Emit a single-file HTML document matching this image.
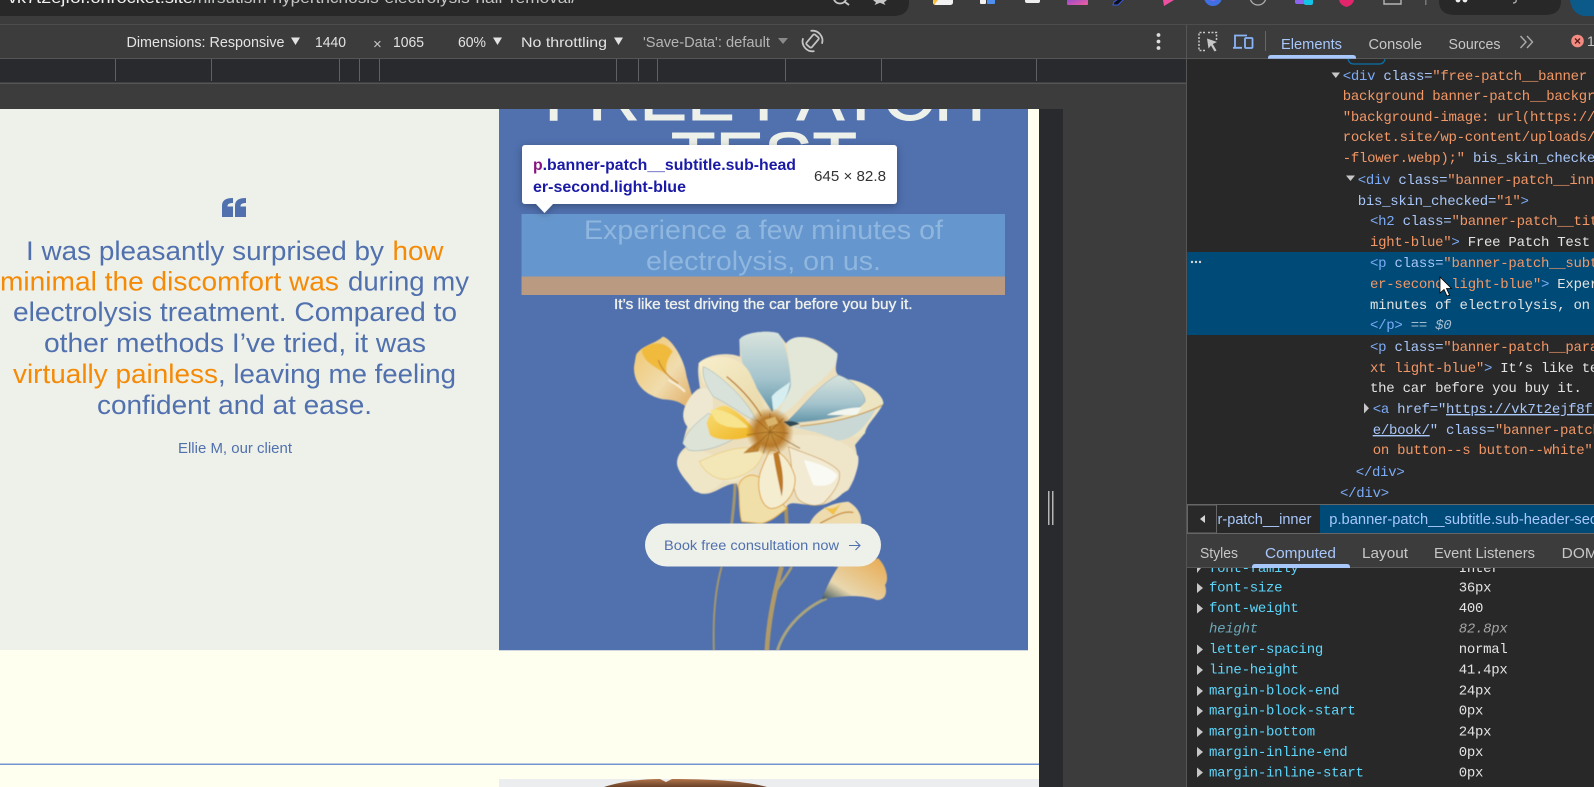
<!DOCTYPE html>
<html><head><meta charset="utf-8"><style>
html,body{margin:0;padding:0;width:1594px;height:787px;overflow:hidden;background:#3c3c3c}
svg{display:block;position:absolute;left:0;top:0}
text{font-family:"Liberation Sans",sans-serif;white-space:pre}
.m text,text.m{font-family:"Liberation Mono",monospace;font-size:14px;letter-spacing:-.26px}
.t{fill:#7cacf8}.a{fill:#a8c7fa}.v{fill:#f29766}.w{fill:#e3e3e3}
.n{fill:#5cd5fb}.c{fill:#e3e3e3}
.q{font-size:27px;fill:#5070ae}.o{font-size:27px;fill:#f58a07}
.tb{font-size:14.5px;fill:#e3e3e3}.dt{font-size:14.5px;fill:#c7c7c7}
</style></head><body>
<svg width="1594" height="787" viewBox="0 0 1594 787" xmlns="http://www.w3.org/2000/svg">
<defs>
<linearGradient id="gb" x1="0" y1="0" x2="0" y2="1"><stop offset="0" stop-color="#d9e4dd"/><stop offset=".6" stop-color="#a3c3cc"/><stop offset="1" stop-color="#5f93a8"/></linearGradient>
<linearGradient id="gy" x1="0" y1="0" x2="1" y2="1"><stop offset="0" stop-color="#f8de7a"/><stop offset="1" stop-color="#f0b31c"/></linearGradient>
<linearGradient id="gc" x1="0" y1="0" x2="1" y2="1"><stop offset="0" stop-color="#f7eecb"/><stop offset="1" stop-color="#e8d8a8"/></linearGradient>
<linearGradient id="gbud" x1="0" y1="0" x2="1" y2="1"><stop offset="0" stop-color="#f0c56a"/><stop offset=".5" stop-color="#f0dcae"/><stop offset="1" stop-color="#d99a48"/></linearGradient>
<linearGradient id="gbud2" x1="0" y1="1" x2="1" y2="0"><stop offset="0" stop-color="#35505a"/><stop offset=".3" stop-color="#e8d7ae"/><stop offset="1" stop-color="#e8a94e"/></linearGradient>
<linearGradient id="gm" x1="0" y1="0" x2="1" y2="1"><stop offset="0" stop-color="#8a46d8"/><stop offset="1" stop-color="#f0609c"/></linearGradient>
<radialGradient id="gcore"><stop offset="0" stop-color="#c9963f"/><stop offset=".6" stop-color="#b87a2a"/><stop offset="1" stop-color="#b87a2a" stop-opacity="0"/></radialGradient>
<linearGradient id="ghair" x1="0" y1="0" x2="0" y2="1"><stop offset="0" stop-color="#b0744a"/><stop offset="1" stop-color="#6a4028"/></linearGradient>
<clipPath id="pg"><rect x="0" y="109" width="1039" height="678"/></clipPath>
<clipPath id="fl"><rect x="0" y="0" width="960" height="990"/></clipPath>
<filter id="sh" x="-10%" y="-20%" width="120%" height="150%"><feDropShadow dx="0" dy="2" stdDeviation="4" flood-color="#000" flood-opacity=".3"/></filter>
<filter id="soft" x="-5%" y="-5%" width="110%" height="110%"><feGaussianBlur stdDeviation="1.400"/></filter>
</defs>

<!-- browser chrome -->
<rect width="1594" height="787" fill="#3c3c3c"/>
<path d="M0 0H909V2Q909 16 893 16H0Z" fill="#282828"/>
<text y="3" x="8" font-size="15.5" fill="#f2f2f2" textLength="185" lengthAdjust="spacingAndGlyphs">vk7t2ejf8f.onrocket.site</text>
<text y="3" x="193" font-size="15.5" fill="#c4c7c5" textLength="383" lengthAdjust="spacingAndGlyphs">/hirsutism-hypertrichosis-electrolysis-hair-removal/</text>
<circle cx="840" cy="-3" r="6.5" fill="none" stroke="#c7c7c7" stroke-width="1.8"/><path d="M845 2L849 5" stroke="#c7c7c7" stroke-width="2"/>
<path d="M873 0H887L884 2.500L885.500 5L880 2.800L874.500 5L876 2.500Z" fill="#c7c7c7"/>
<rect x="933" y="-4" width="20" height="9" rx="2.5" fill="#f2f2f2"/><path d="M933 0L938 0L934 5Z" fill="#f5bd3c"/>
<rect x="980" y="-4" width="6" height="8" rx="1" fill="#f2f2f2"/><rect x="987" y="-4" width="8" height="8" rx="1" fill="#4f8ff0"/>
<rect x="1025" y="-4" width="15" height="7" rx="2" fill="#eee"/>
<rect x="1067" y="-3" width="21" height="8" rx="1" fill="url(#gm)"/>
<path d="M1113 5L1118 5L1124 -1L1118 -1L1114 2Z" fill="#10101a" stroke="#3a5ce0" stroke-width="1"/>
<path d="M1163 0H1174L1164 6Z" fill="#ee4fa0"/>
<circle cx="1213" cy="-3" r="9" fill="#3f6fe0"/><circle cx="1213" cy="-3" r="4" fill="#8a66f0"/>
<circle cx="1258" cy="-3" r="8" fill="none" stroke="#b0b0b0" stroke-width="1.3"/>
<rect x="1295" y="-3" width="13" height="7" rx="2" fill="#8d64ee"/><rect x="1304" y="-2" width="9" height="7" rx="2" fill="#14c4e6"/>
<path d="M1339 0H1354Q1353 5 1346.500 7Q1340 5 1339 0Z" fill="#e3266c"/>
<path d="M1384 0V4H1401V0" fill="none" stroke="#b5b5b5" stroke-width="1.4"/>
<rect x="1425" y="0" width="1.500" height="5" fill="#777"/>
<path d="M1439 0H1561V1Q1561 15 1545 15H1455Q1439 15 1439 1Z" fill="#282828"/>
<circle cx="1458" cy="0" r="2.400" fill="#eee"/><circle cx="1465" cy="0" r="2.400" fill="#eee"/>
<path d="M1513 3Q1517 3 1516 -1" fill="none" stroke="#bbb" stroke-width="1.200"/>
<path d="M1570 0H1594V16H1584Q1572 14 1570 0Z" fill="#0b5a8a"/>
<rect y="24" width="1594" height="1" fill="#4d4d4d"/>

<!-- device toolbar -->
<text x="126.500" y="47" class="tb" textLength="158" lengthAdjust="spacingAndGlyphs">Dimensions: Responsive</text>
<path d="M291 37.500H300L295.500 45Z" fill="#e3e3e3"/>
<text x="315" y="47" class="tb" textLength="31" lengthAdjust="spacingAndGlyphs">1440</text>
<text x="373" y="49" font-size="15" fill="#c7c7c7">×</text>
<text x="393" y="47" class="tb" textLength="31" lengthAdjust="spacingAndGlyphs">1065</text>
<text x="458" y="47" class="tb" textLength="28" lengthAdjust="spacingAndGlyphs">60%</text>
<path d="M493 37.500H502L497.500 45Z" fill="#e3e3e3"/>
<text x="521" y="47" class="tb" style="font-size:14px" textLength="86" lengthAdjust="spacingAndGlyphs">No throttling</text>
<path d="M614 37.500H623L618.500 45Z" fill="#e3e3e3"/>
<text x="643" y="47" class="tb" style="fill:#b5b5b5" textLength="127" lengthAdjust="spacingAndGlyphs">'Save-Data': default</text>
<path d="M778 38H788L783 44Z" fill="#8a8a8a"/>
<g transform="translate(812.500 41) rotate(40)" fill="none" stroke="#c4c4c4" stroke-width="1.800">
<rect x="-3.500" y="-6.500" width="7" height="13" rx="1.500"/>
<path d="M-8 -6.500A10 10 0 0 1 9 -4"/><path d="M8 6.500A10 10 0 0 1 -9 4"/>
</g>
<circle cx="1158.500" cy="35" r="1.900" fill="#dcdcdc"/><circle cx="1158.500" cy="41.500" r="1.900" fill="#dcdcdc"/><circle cx="1158.500" cy="48" r="1.900" fill="#dcdcdc"/>
<rect y="58" width="1186" height="1" fill="#555"/>

<!-- rulers -->
<rect y="59" width="1186" height="24" fill="#292a2d"/>
<rect y="82.500" width="1186" height="1.500" fill="#555"/>
<g fill="#5f6063">
<rect x="115" y="59" width="1" height="22"/><rect x="211" y="59" width="1" height="22"/><rect x="339" y="59" width="1" height="22"/><rect x="359" y="59" width="1" height="22"/><rect x="379" y="59" width="1" height="22"/><rect x="616" y="59" width="1" height="22"/><rect x="638" y="59" width="1" height="22"/><rect x="657" y="59" width="1" height="22"/><rect x="785" y="59" width="1" height="22"/><rect x="881" y="59" width="1" height="22"/><rect x="1036" y="59" width="1" height="22"/>
</g>

<!-- resizer strip -->
<rect x="1039" y="109" width="24" height="678" fill="#292a2d"/>
<rect x="1048" y="491" width="1.500" height="34" fill="#b5b5b5"/><rect x="1052" y="491" width="1.500" height="34" fill="#b5b5b5"/>

<!-- page -->
<g clip-path="url(#pg)">
<rect x="0" y="109" width="1039" height="678" fill="#fffff0"/>
<rect x="0" y="109" width="499" height="541" fill="#eef0ea"/>
<rect x="499" y="109" width="529" height="541" fill="#5070ae"/>
<rect x="499" y="650" width="529" height="1" fill="#cfd6dc"/>

<!-- quote -->
<path d="M222 217V206C222 200 226 198 233 198V203C229 203 227.500 204 227.500 206.500H233V217Z" fill="#5070ae"/>
<path d="M235 217V206C235 200 239 198 246 198V203C242 203 240.500 204 240.500 206.500H246V217Z" fill="#5070ae"/>
<text x="26" y="260" class="q" textLength="358" lengthAdjust="spacingAndGlyphs">I was pleasantly surprised by</text>
<text x="392.500" y="260" class="o" textLength="51" lengthAdjust="spacingAndGlyphs">how</text>
<text x="0" y="290.500" class="o" textLength="339" lengthAdjust="spacingAndGlyphs">minimal the discomfort was</text>
<text x="348" y="290.500" class="q" textLength="121" lengthAdjust="spacingAndGlyphs">during my</text>
<text x="13" y="321" class="q" textLength="444" lengthAdjust="spacingAndGlyphs">electrolysis treatment. Compared to</text>
<text x="44" y="352" class="q" textLength="382" lengthAdjust="spacingAndGlyphs">other methods I’ve tried, it was</text>
<text x="13" y="383" class="o" textLength="205" lengthAdjust="spacingAndGlyphs">virtually painless</text>
<text x="218" y="383" class="q" textLength="238" lengthAdjust="spacingAndGlyphs">, leaving me feeling</text>
<text x="97" y="414" class="q" textLength="275" lengthAdjust="spacingAndGlyphs">confident and at ease.</text>
<text x="178" y="453" font-size="14.500" fill="#5070ae" textLength="114" lengthAdjust="spacingAndGlyphs">Ellie M, our client</text>

<!-- title -->
<text x="544.500" y="120" font-size="65" fill="#eef0ea" stroke="#eef0ea" stroke-width="1" textLength="441" lengthAdjust="spacingAndGlyphs">FREE PATCH</text>
<text x="671" y="178" font-size="65" fill="#eef0ea" stroke="#eef0ea" stroke-width="1" textLength="186" lengthAdjust="spacingAndGlyphs">TEST</text>

<!-- highlight -->
<rect x="521.500" y="214" width="483.500" height="62.500" fill="#6596cd"/>
<rect x="521.500" y="276.500" width="483.500" height="18.500" fill="#ba9a80"/>
<text x="584" y="239" font-size="27" fill="#8fb6df" textLength="359" lengthAdjust="spacingAndGlyphs">Experience a few minutes of</text>
<text x="646" y="270" font-size="27" fill="#8fb6df" textLength="235" lengthAdjust="spacingAndGlyphs">electrolysis, on us.</text>
<text x="614" y="309" font-size="14.500" fill="#eef0ea" stroke="#eef0ea" stroke-width=".35" textLength="298.500" lengthAdjust="spacingAndGlyphs">It’s like test driving the car before you buy it.</text>

<!-- flower -->
<g transform="translate(600 320) scale(.33333)" clip-path="url(#fl)">
<g filter="url(#soft)">
<g fill="none">
<path d="M405 485C405 530 400 570 395 612" stroke="#a3966e" stroke-width="9"/>
<path d="M365 740C345 810 338 900 342 1000" stroke="#a3966e" stroke-width="6"/>
<path d="M558 560L560 612" stroke="#a8935f" stroke-width="11"/>
<path d="M545 740C525 810 505 900 500 1000" stroke="#b09a68" stroke-width="14"/>
<path d="M575 740C560 770 540 790 530 810" stroke="#a99c72" stroke-width="8"/>
<path d="M680 835C620 860 550 920 530 1000" stroke="#a9a47d" stroke-width="9"/>
<path d="M240 210C255 245 280 280 298 300" stroke="#cfa055" stroke-width="14"/>
</g>
<!-- top-left bud -->
<path d="M108 105C125 75 170 70 188 50C215 55 255 120 260 170C270 205 285 260 300 295L285 300C262 250 232 240 190 238C140 228 100 195 102 140Z" fill="url(#gbud)"/>
<path d="M125 90C150 65 195 60 218 95C205 115 195 130 200 165C170 140 130 130 125 90Z" fill="#f0bb3e"/>
<path d="M175 120C185 150 210 175 235 190" stroke="#c98e34" stroke-width="4" fill="none"/>
<path d="M205 180C225 190 240 200 255 215" stroke="#f8efd6" stroke-width="6" fill="none"/>
<!-- bottom-right bud -->
<path d="M700 740L835 715C860 740 868 780 855 795C865 825 850 842 830 840C790 825 740 825 665 838C680 800 695 770 715 740Z" fill="url(#gbud2)"/>
<path d="M628 612C650 565 700 548 745 545C772 560 787 585 783 614Z" fill="#eedcae"/>
<path d="M660 610C700 590 730 570 760 578" stroke="#c98e34" stroke-width="4" fill="none"/>
<path d="M670 560Q700 575 725 548L700 585Z" fill="#f0c24a"/>
<!-- underlay closes the petal gaps -->
<path d="M300 125C340 95 400 100 420 110L418 60C430 35 510 30 535 40L558 70C590 35 660 50 712 100C712 130 700 150 715 165L745 178C795 182 850 225 850 250C830 290 800 310 790 345L765 375C780 430 770 470 745 510L720 525C700 545 670 560 640 555C600 555 570 540 560 560C540 590 500 612 480 610L425 605C420 560 420 520 410 490C370 490 340 530 300 520C270 500 225 450 232 420C235 400 250 385 262 378L248 370C255 340 260 325 262 320C245 300 245 270 265 240C280 215 295 205 300 205C295 170 290 140 300 125Z" fill="#ecdfbd"/>
<!-- back petals -->
<path d="M232 420C240 390 270 385 300 390L460 450C420 490 380 490 370 480C350 510 300 530 280 510C260 480 225 450 232 420Z" fill="#efe6c8"/>
<path d="M250 290C255 240 290 200 320 205C350 215 340 300 320 322L265 326Z" fill="#eee8d2"/>
<path d="M415 500C420 470 470 440 500 500L560 565C530 590 500 610 480 610L425 605C415 570 420 530 415 500Z" fill="#f0dfa9" stroke="#e6ac3a" stroke-width="3"/>
<path d="M740 178C790 180 850 220 850 250C830 290 800 310 795 340C770 365 650 340 590 325L700 300C770 285 800 250 790 225Z" fill="#ede4c1"/>
<path d="M570 345C640 340 740 350 775 410C780 460 740 520 700 542C660 470 610 420 570 345Z" fill="#efe5c8"/>
<!-- blue tops -->
<path d="M558 70C590 30 660 60 712 100C715 140 680 170 620 215C590 250 560 280 530 290C570 220 575 130 558 70Z" fill="#e2e7d8"/>
<path d="M418 60C430 35 510 30 535 40C560 70 575 160 572 200C560 240 530 270 515 275C490 230 440 170 425 120Z" fill="url(#gb)"/>
<path d="M515 230C530 210 555 200 570 185C565 235 540 260 520 275Z" fill="#d7eef0"/>
<path d="M560 305C610 260 660 190 715 165C750 175 800 220 795 245C760 290 680 300 560 310Z" fill="url(#gb)" stroke="#7ba0ad" stroke-width="1.500"/>
<path d="M680 285C710 270 750 262 785 262L770 285Z" fill="#f3f6ee"/>
<path d="M570 320C640 318 750 300 830 262C800 320 760 360 710 362C670 340 620 330 570 320Z" fill="#c9d8d4"/>
<path d="M600 318C680 312 780 290 848 255" fill="none" stroke="#c9973b" stroke-width="3"/>
<!-- left petals -->
<path d="M295 130C330 100 420 100 450 160C480 220 490 260 500 290C440 290 360 230 310 190Z" fill="url(#gc)"/>
<path d="M380 170C430 210 470 260 485 290" fill="none" stroke="#b97a25" stroke-width="4"/>
<path d="M310 140C340 150 440 230 470 305C420 280 400 260 340 230C320 200 305 170 310 140Z" fill="#d8e2da" stroke="#8aa8b2" stroke-width="1.500"/>
<path d="M248 370C260 330 300 300 325 280L440 330C380 380 300 400 265 390Z" fill="#dde3d6" stroke="#86a7b5" stroke-width="1.500"/>
<path d="M320 310C330 270 360 250 385 260C420 280 440 300 460 325L470 345C420 362 350 365 330 345Z" fill="url(#gy)"/>
<path d="M330 270C360 262 410 285 445 322C410 325 370 325 345 300Z" fill="#f7e48c"/>
<!-- lower petals -->
<path d="M565 380C610 400 690 420 718 455C725 490 690 530 670 550C640 565 600 550 590 530C570 480 580 430 565 380Z" fill="#f2ead2" stroke="#c99a52" stroke-width="2"/>
<path d="M612 420C650 428 695 445 712 465C700 500 670 500 640 495C630 470 620 445 612 420Z" fill="#fafaf4"/>
<path d="M298 425C350 400 430 365 490 395C480 440 440 470 380 478C340 480 310 450 298 425Z" fill="#f3e7b8" stroke="#e8c870" stroke-width="2"/>
<path d="M510 390C540 390 570 420 585 470C590 530 540 570 510 565C480 555 470 500 480 460C490 430 500 410 510 390Z" fill="#f5edcf" stroke="#dca447" stroke-width="3"/>
<path d="M535 395C545 440 555 480 545 530C535 480 525 440 520 400Z" fill="#bd7a24"/>
<path d="M430 400C455 375 480 360 490 350L475 395Z" fill="#bd8230"/>
<!-- core -->
<circle cx="510" cy="335" r="72" fill="url(#gcore)"/>
<g stroke="#9a6522" stroke-width="2.500" fill="none"><path d="M510 335L470 300M510 335L510 280M510 335L550 295M510 335L565 340M510 335L600 385M510 335L540 400M510 335L490 400M510 335L440 345M510 335L460 385"/></g>
<path d="M495 300L525 290L535 310L505 320Z" fill="#d9b46a"/>
<path d="M550 305Q580 300 600 312L570 320Z" fill="#2f4a52"/>
</g>
</g>

<!-- button -->
<rect x="645" y="523.500" width="236" height="43" rx="21.500" fill="#eef0ea"/>
<text x="664" y="550" font-size="13.500" fill="#5070ae" textLength="175" lengthAdjust="spacingAndGlyphs">Book free consultation now</text>
<path d="M849 545.500H860M855.500 541L860 545.500L855.500 550" fill="none" stroke="#5070ae" stroke-width="1.100"/>

<!-- tooltip -->
<g filter="url(#sh)">
<rect x="522" y="145" width="375" height="59" rx="3" fill="#fff"/>
<path d="M536 204H553L544.500 213Z" fill="#fff"/>
</g>
<text x="533" y="170" font-size="15.500" font-weight="700" fill="#1a1aa6" textLength="263" lengthAdjust="spacingAndGlyphs"><tspan fill="#881280">p</tspan>.banner-patch__subtitle.sub-head</text>
<text x="533" y="192" font-size="15.500" font-weight="700" fill="#1a1aa6" textLength="153" lengthAdjust="spacingAndGlyphs">er-second.light-blue</text>
<text x="814" y="181" font-size="14.500" fill="#333" textLength="72" lengthAdjust="spacingAndGlyphs">645 × 82.8</text>

<!-- divider & next section -->
<rect x="0" y="763.500" width="1039" height="1.500" fill="#7595cf"/>
<rect x="499" y="779" width="540" height="8" fill="#ecedef"/>
<path d="M604 787C620 782 640 779 660 779L666 782L672 779C710 779 745 781 767 787Z" fill="url(#ghair)"/>
</g>

<!-- devtools -->
<rect x="1186" y="25" width="408" height="762" fill="#3c3c3c"/>
<rect x="1186" y="25" width="1" height="762" fill="#555"/>
<rect x="1187" y="59" width="407" height="445" fill="#282828"/>
<rect x="1187" y="58" width="407" height="1" fill="#555"/>
<!-- header icons -->
<path d="M1205 32.500H1199V50.500H1205M1208 32.500H1216.500V41" fill="none" stroke="#c7c7c7" stroke-width="1.500" stroke-dasharray="2 1.500"/>
<path d="M1207 38.500L1217 42L1212.800 44L1216.500 50.500L1214.500 51.500L1211 45.500L1208.500 48.500Z" fill="#c7c7c7"/>
<path d="M1235 47.500V35.500H1247M1233 47.800H1242" fill="none" stroke="#8ab4f8" stroke-width="1.800"/>
<rect x="1245" y="38" width="7.500" height="10" rx="1" fill="none" stroke="#8ab4f8" stroke-width="1.800"/>
<rect x="1265" y="31" width="1" height="20" fill="#666"/>
<text x="1281" y="49" font-size="14.500" fill="#a8c7fa" textLength="61" lengthAdjust="spacingAndGlyphs">Elements</text>
<text x="1368.500" y="49" class="dt" textLength="53.500" lengthAdjust="spacingAndGlyphs">Console</text>
<text x="1448.500" y="49" class="dt" textLength="52" lengthAdjust="spacingAndGlyphs">Sources</text>
<path d="M1520.500 36L1526 42L1520.500 48M1527 36L1532.500 42L1527 48" fill="none" stroke="#aaa" stroke-width="1.400"/>
<circle cx="1577.500" cy="41" r="6.300" fill="#f28b82"/>
<path d="M1575 38.500L1580 43.500M1580 38.500L1575 43.500" stroke="#5c1a16" stroke-width="1.300"/>
<text x="1587" y="46" font-size="14" fill="#c7c7c7">1</text>
<path d="M1268 58.700V58Q1268 55 1271 55H1353Q1356 55 1356 58V58.700Z" fill="#a8c7fa"/>
<path d="M1348 59Q1349 64 1354 64H1379Q1384 64 1385 59" fill="none" stroke="#0b6ea8" stroke-width="1.300"/>

<!-- selection -->
<rect x="1187" y="252" width="407" height="83" fill="#004a77"/>
<circle cx="1192" cy="262" r="1.200" fill="#d5d5d5"/><circle cx="1196" cy="262" r="1.200" fill="#d5d5d5"/><circle cx="1200" cy="262" r="1.200" fill="#d5d5d5"/>

<!-- DOM tree -->
<path d="M1331.500 72.500H1340L1335.800 78Z" fill="#c7c7c7"/>
<path d="M1346 175.500H1355L1350.500 181Z" fill="#c7c7c7"/>
<path d="M1364 403V413.500L1369 408.200Z" fill="#c7c7c7"/>
<g class="m">
<text x="1342.700" y="80"><tspan class="t">&lt;div</tspan><tspan class="a"> class=</tspan><tspan class="v">"free-patch__banner</tspan></text>
<text x="1342.700" y="100"><tspan class="v">background banner-patch__background</tspan></text>
<text x="1342.700" y="121"><tspan class="v">"background-image: url(https://</tspan></text>
<text x="1342.700" y="141"><tspan class="v">rocket.site/wp-content/uploads/</tspan></text>
<text x="1342.700" y="162"><tspan class="v">-flower.webp);"</tspan><tspan class="a"> bis_skin_checked</tspan></text>
<text x="1357.700" y="184"><tspan class="t">&lt;div</tspan><tspan class="a"> class=</tspan><tspan class="v">"banner-patch__inner</tspan></text>
<text x="1357.700" y="205"><tspan class="a">bis_skin_checked=</tspan><tspan class="v">"1"</tspan><tspan class="t">&gt;</tspan></text>
<text x="1370" y="225"><tspan class="t">&lt;h2</tspan><tspan class="a"> class=</tspan><tspan class="v">"banner-patch__title</tspan></text>
<text x="1370" y="246"><tspan class="v">ight-blue"</tspan><tspan class="t">&gt;</tspan><tspan class="w"> Free Patch Test</tspan></text>
<text x="1370" y="267"><tspan class="t">&lt;p</tspan><tspan class="a"> class=</tspan><tspan class="v">"banner-patch__subtitle</tspan></text>
<text x="1370" y="288"><tspan class="v">er-second light-blue"</tspan><tspan class="t">&gt;</tspan><tspan class="w"> Experience</tspan></text>
<text x="1370" y="309"><tspan class="w">minutes of electrolysis, on us.</tspan></text>
<text x="1370" y="329"><tspan class="t">&lt;/p&gt;</tspan><tspan fill="#a9bdd0"> == </tspan><tspan fill="#a9bdd0" font-style="italic">$0</tspan></text>
<text x="1370" y="351"><tspan class="t">&lt;p</tspan><tspan class="a"> class=</tspan><tspan class="v">"banner-patch__paragraph</tspan></text>
<text x="1370" y="372"><tspan class="v">xt light-blue"</tspan><tspan class="t">&gt;</tspan><tspan class="w"> It’s like test</tspan></text>
<text x="1370" y="392"><tspan class="w">the car before you buy it. </tspan></text>
<text x="1372.700" y="413"><tspan class="t">&lt;a</tspan><tspan class="a"> href="</tspan><tspan class="a" text-decoration="underline">https://vk7t2ejf8f.onrocket</tspan></text>
<text x="1372.700" y="434"><tspan class="a" text-decoration="underline">e/book/</tspan><tspan class="a">" class=</tspan><tspan class="v">"banner-patch</tspan></text>
<text x="1372.700" y="454"><tspan class="v">on button--s button--white"</tspan></text>
<text x="1355.700" y="476"><tspan class="t">&lt;/div&gt;</tspan></text>
<text x="1340" y="497"><tspan class="t">&lt;/div&gt;</tspan></text>
</g>

<!-- cursor -->
<path d="M1440 277V293L1444 289.500L1447 296L1449.500 295L1446.500 288.500L1451.500 288.500Z" fill="#fff" stroke="#000" stroke-width=".8"/>

<!-- breadcrumbs -->
<rect x="1187" y="504" width="407" height="30" fill="#282828"/>
<rect x="1187" y="504" width="407" height="1" fill="#666"/>
<rect x="1187" y="533" width="407" height="1" fill="#666"/>
<rect x="1187.500" y="505" width="29" height="28" fill="#292929" stroke="#666" stroke-width="1"/>
<path d="M1205 515V523L1200 519Z" fill="#d5d5d5"/>
<text x="1217.500" y="524" font-size="14.500" fill="#a8c7fa" textLength="94" lengthAdjust="spacingAndGlyphs">r-patch__inner</text>
<rect x="1320" y="505" width="274" height="28" fill="#004a77"/>
<text x="1329.300" y="524" font-size="14.500" fill="#a8c7fa" textLength="268" lengthAdjust="spacingAndGlyphs">p.banner-patch__subtitle.sub-header-sec</text>

<!-- computed tabs -->
<rect x="1187" y="534" width="407" height="33" fill="#3c3c3c"/>
<text x="1200" y="558" class="dt" textLength="38" lengthAdjust="spacingAndGlyphs">Styles</text>
<text x="1265" y="558" font-size="14.500" fill="#a8c7fa" textLength="71" lengthAdjust="spacingAndGlyphs">Computed</text>
<text x="1362" y="558" class="dt" textLength="46" lengthAdjust="spacingAndGlyphs">Layout</text>
<text x="1434" y="558" class="dt" textLength="101" lengthAdjust="spacingAndGlyphs">Event Listeners</text>
<text x="1561.700" y="558" class="dt" textLength="36" lengthAdjust="spacingAndGlyphs">DOM</text>
<rect x="1187" y="568" width="407" height="219" fill="#282828"/>

<g class="m">
<g fill="#c7c7c7"><path d="M1197 568V573L1201 568Z"/><path d="M1197 583V593L1203 588Z"/><path d="M1197 603.500V613.500L1203 608.500Z"/><path d="M1197 644.500V654.500L1203 649.500Z"/><path d="M1197 665V675L1203 670Z"/><path d="M1197 686V696L1203 691Z"/><path d="M1197 706V716L1203 711Z"/><path d="M1197 727V737L1203 732Z"/><path d="M1197 747V757L1203 752Z"/><path d="M1197 767.500V777.500L1203 772.500Z"/></g>
<svg x="1187" y="568" width="407" height="219" viewBox="1187 568 407 219">
<text x="1209" y="572" class="n">font-family</text><text x="1458.700" y="572" class="c">Inter</text>
</svg>
<text x="1209" y="591.500" class="n">font-size</text><text x="1458.700" y="591.500" class="c">36px</text>
<text x="1209" y="612" class="n">font-weight</text><text x="1458.700" y="612" class="c">400</text>
<text x="1209" y="632.500" fill="#6aa7b8" font-style="italic">height</text><text x="1458.700" y="632.500" fill="#a4a4a4" font-style="italic">82.8px</text>
<text x="1209" y="653" class="n">letter-spacing</text><text x="1458.700" y="653" class="c">normal</text>
<text x="1209" y="673.500" class="n">line-height</text><text x="1458.700" y="673.500" class="c">41.4px</text>
<text x="1209" y="694.500" class="n">margin-block-end</text><text x="1458.700" y="694.500" class="c">24px</text>
<text x="1209" y="714.500" class="n">margin-block-start</text><text x="1458.700" y="714.500" class="c">0px</text>
<text x="1209" y="735.500" class="n">margin-bottom</text><text x="1458.700" y="735.500" class="c">24px</text>
<text x="1209" y="756" class="n">margin-inline-end</text><text x="1458.700" y="756" class="c">0px</text>
<text x="1209" y="776.500" class="n">margin-inline-start</text><text x="1458.700" y="776.500" class="c">0px</text>
</g>
<rect x="1187" y="567" width="407" height="1" fill="#555"/>
<path d="M1252 568V567Q1252 564 1255 564H1347Q1350 564 1350 567V568Z" fill="#a8c7fa"/>
</svg>
</body></html>
